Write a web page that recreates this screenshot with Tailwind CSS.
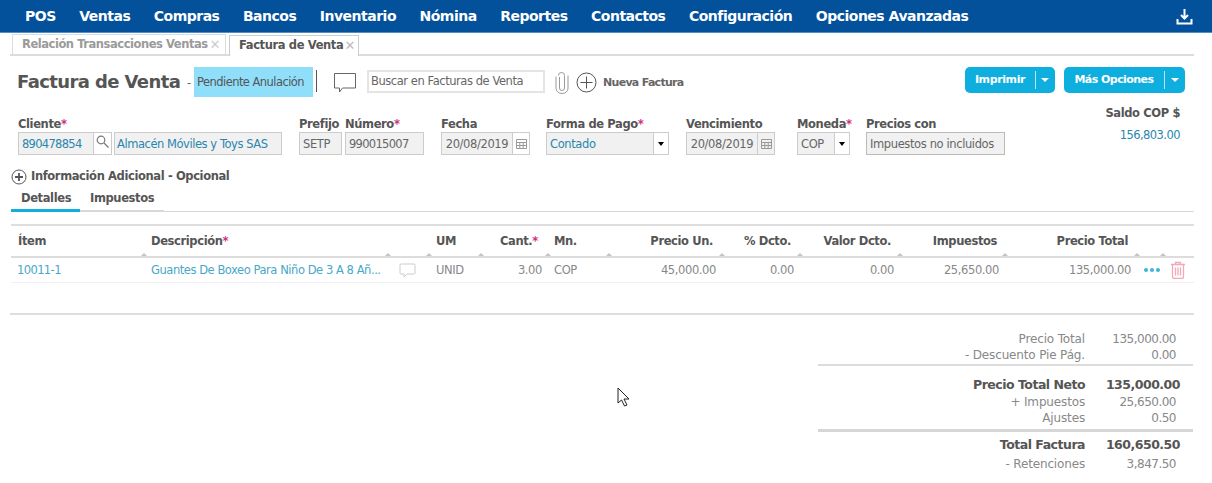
<!DOCTYPE html>
<html lang="es">
<head>
<meta charset="utf-8">
<script src="https://cdn.jsdelivr.net/npm/@tailwindcss/browser@4"></script>
<title>Factura de Venta</title>
</head>
<body class="relative w-[1212px] h-[483px] overflow-hidden whitespace-nowrap bg-white font-['DejaVu_Sans',sans-serif] text-[11.5px] text-[#666] tracking-[-0.38px]">
<!-- nav -->
<nav class="flex items-center justify-between h-[33px] bg-[#03509b] border-b border-[#4f8fc9] pl-[25px] pr-[19px] text-white">
  <div class="flex gap-[23.5px] text-[14px] font-bold tracking-[-0.5px]">
    <span>POS</span><span>Ventas</span><span>Compras</span><span>Bancos</span><span>Inventario</span><span>Nómina</span><span>Reportes</span><span>Contactos</span><span>Configuración</span><span>Opciones Avanzadas</span>
  </div>
  <svg width="17" height="17" viewBox="0 0 17 17" fill="none" stroke="white" stroke-width="2"><path d="M8.5 1v9M5 7l3.5 3.5L12 7M1.5 11v4.5h14V11"/></svg>
</nav>
<!-- tabs -->
<div class="flex items-end gap-[3px] h-[23px] ml-[10px] mr-[18px] pl-[2px] border-b-2 border-[#dcdcdc]">
  <div class="flex items-center justify-between h-[20px] w-[214px] pl-[9px] pr-[5px] border border-b-0 border-[#ddd] font-bold text-[#9a9a9a] tracking-[-0.45px]"><span>Relación Transacciones Ventas</span><span class="font-normal text-[#ccc] text-[13px]">✕</span></div>
  <div class="flex items-center justify-between h-[21px] w-[130px] pl-[9px] pr-[3px] border border-[#ccc] border-b-0 bg-white font-bold text-[#555] -mb-[2px]"><span>Factura de Venta</span><span class="font-normal text-[#bbb] text-[13px]">✕</span></div>
</div>
<!-- title row -->
<div class="flex items-start h-[30px] mt-[11px] pl-[17px]">
  <h1 class="w-[170px] mt-[1px] text-[18px] leading-[28px] font-bold text-[#555] tracking-[-0.6px]">Factura de Venta</h1>
  <span class="w-[7px] pt-[1px] leading-[30px] text-[#666]">-</span>
  <div class="flex items-center w-[119px] h-[30px] pl-[3px] pt-[1px] bg-[#8fdffa] text-[#555] tracking-[-0.55px]">Pendiente Anulación</div>
  <div class="w-px h-[22px] mt-[3px] ml-[3px] bg-[#555]"></div>
  <svg class="mt-[5px] ml-[16px]" width="24" height="22" viewBox="0 0 24 22" fill="none" stroke="#666"><path d="M1.5 1.5h21v14.5h-13l-3 4v-4h-5z"/></svg>
  <div class="flex items-center w-[178px] h-[23px] mt-[3px] ml-[10px] pl-[2px] pt-[1px] border-2 border-[#e4e4e4] text-[#666] tracking-[-0.44px]">Buscar en Facturas de Venta</div>
  <svg class="mt-[4px] ml-[10px]" width="14" height="23" viewBox="0 0 14 23" fill="none" stroke="#999"><path d="M4.5 6v11a2.5 2.5 0 0 0 5 0V4.500a3 3 0 0 0-6 0M1 5.500v12a6 5 0 0 0 12 0v-13"/></svg>
  <svg class="mt-[5px] ml-[7px]" width="21" height="21" viewBox="0 0 21 21" fill="none" stroke="#555"><circle cx="10.500" cy="10.500" r="9.500"/><path d="M10.500 4.500v12M4.500 10.500h12"/></svg>
  <span class="ml-[6px] leading-[32px] text-[11px] font-bold text-[#666] tracking-[-0.7px]">Nueva Factura</span>
  <div class="flex items-center w-[90px] h-[26px] ml-auto rounded-[5px] bg-[#0eaede] text-white text-[11px] font-bold">
    <span class="w-[70px] pt-[1px] text-center">Imprimir</span><span class="w-px h-[18px] bg-white/70"></span><span class="ml-[5px] w-0 h-0 border-x-[4px] border-t-[4px] border-x-transparent border-t-white"></span>
  </div>
  <div class="flex items-center w-[121px] h-[26px] ml-[9px] mr-[27px] rounded-[5px] bg-[#0eaede] text-white text-[11px] font-bold tracking-[-0.55px]">
    <span class="w-[100px] pt-[1px] text-center">Más Opciones</span><span class="w-px h-[18px] bg-white/70"></span><span class="ml-[6px] w-0 h-0 border-x-[4px] border-t-[4px] border-x-transparent border-t-white"></span>
  </div>
</div>
<!-- form -->
<div class="relative flex h-[59px] mt-[8px] pl-[18px] font-normal">
  <div class="w-[281px]">
    <div class="h-[27px] pt-[12px] leading-[15px] font-bold text-[#555]">Cliente<b class="text-[#d0307a]">*</b></div>
    <div class="flex h-[23px]">
      <div class="flex items-center w-[76px] px-[3px] pt-[3px] border border-[#ccc] bg-[#f1f1f1] text-[#2b86ad] tracking-[-0.7px]">890478854</div>
      <div class="flex items-start justify-center w-[18px] pt-[2px] border-y border-r border-[#ccc]"><svg width="13" height="13" viewBox="0 0 13 13" fill="none" stroke="#777" stroke-width="1.200"><circle cx="5" cy="5" r="3.800"/><path d="M8 8l4.500 4.500"/></svg></div>
      <div class="flex items-center w-[168px] ml-[2px] pl-[2px] pt-[3px] border border-[#ccc] bg-[#f1f1f1] text-[#2b86ad] tracking-[-0.45px]">Almacén Móviles y Toys SAS</div>
    </div>
  </div>
  <div class="w-[46px]">
    <div class="h-[27px] pt-[12px] leading-[15px] font-bold text-[#555]">Prefijo</div>
    <div class="flex items-center w-[43px] h-[23px] px-[3px] pt-[3px] border border-[#ccc] bg-[#f1f1f1]">SETP</div>
  </div>
  <div class="w-[96px]">
    <div class="h-[27px] pt-[12px] leading-[15px] font-bold text-[#555]">Número<b class="text-[#d0307a]">*</b></div>
    <div class="flex items-center w-[79px] h-[23px] px-[3px] pt-[3px] border border-[#ccc] bg-[#f1f1f1] tracking-[-0.7px]">990015007</div>
  </div>
  <div class="w-[105px]">
    <div class="h-[27px] pt-[12px] leading-[15px] font-bold text-[#555]">Fecha</div>
    <div class="flex w-[89px] h-[23px] border border-[#ccc]">
      <div class="flex flex-1 items-center justify-center pt-[3px] bg-[#f1f1f1]">20/08/2019</div>
      <div class="flex items-center justify-center w-[17px] border-l border-[#ccc]"><svg width="11" height="10" viewBox="0 0 11 10" fill="none" stroke="#999"><path d="M.5.500h10v9H.5zM.5 3.500h10M.5 6.500h10M3.800 3.500v6M7.200 3.500v6"/></svg></div>
    </div>
  </div>
  <div class="w-[140px]">
    <div class="h-[27px] pt-[12px] leading-[15px] font-bold text-[#555]">Forma de Pago<b class="text-[#d0307a]">*</b></div>
    <div class="flex w-[123px] h-[23px] border border-[#ccc]">
      <div class="flex flex-1 items-center px-[3px] pt-[3px] bg-[#f1f1f1] text-[#2b86ad]">Contado</div>
      <div class="flex items-center justify-center w-[15px] border-l border-[#ccc]"><span class="w-0 h-0 border-x-[3px] border-t-[4px] border-x-transparent border-t-black"></span></div>
    </div>
  </div>
  <div class="w-[111px]">
    <div class="h-[27px] pt-[12px] leading-[15px] font-bold text-[#555]">Vencimiento</div>
    <div class="flex w-[89px] h-[23px] border border-[#ccc]">
      <div class="flex flex-1 items-center justify-center pt-[3px] bg-[#f1f1f1]">20/08/2019</div>
      <div class="flex items-center justify-center w-[17px] border-l border-[#ccc] bg-[#f1f1f1]"><svg width="11" height="10" viewBox="0 0 11 10" fill="none" stroke="#999"><path d="M.5.500h10v9H.5zM.5 3.500h10M.5 6.500h10M3.800 3.500v6M7.200 3.500v6"/></svg></div>
    </div>
  </div>
  <div class="w-[69px]">
    <div class="h-[27px] pt-[12px] leading-[15px] font-bold text-[#555]">Moneda<b class="text-[#d0307a]">*</b></div>
    <div class="flex w-[53px] h-[23px] border border-[#ccc]">
      <div class="flex flex-1 items-center px-[3px] pt-[3px] bg-[#f1f1f1]">COP</div>
      <div class="flex items-center justify-center w-[15px] border-l border-[#ccc]"><span class="w-0 h-0 border-x-[3px] border-t-[4px] border-x-transparent border-t-black"></span></div>
    </div>
  </div>
  <div class="w-[139px]">
    <div class="h-[27px] pt-[12px] leading-[15px] font-bold text-[#555]">Precios con</div>
    <div class="flex items-center w-[139px] h-[23px] px-[3px] pt-[3px] border border-[#bbb] bg-[#f1f1f1]">Impuestos no incluidos</div>
  </div>
  <div class="ml-auto mr-[32px] text-right">
    <div class="leading-[15px] mt-[1px] font-bold text-[#555]">Saldo COP $</div>
    <div class="mt-[7px] leading-[15px] text-[#2b86ad] tracking-[-0.55px]">156,803.00</div>
  </div>
</div>
<!-- optional -->
<div class="flex items-center h-[20px] mt-[3px] pl-[11px] font-bold text-[#555]">
  <svg class="mr-[4px]" width="16" height="16" viewBox="0 0 16 16" fill="none" stroke="#555"><circle cx="8" cy="8" r="7"/><path d="M8 4v8M4 8h8" stroke-width="1.800"/></svg>
  Información Adicional - Opcional
</div>
<!-- sub tabs -->
<div class="flex h-[25px] ml-[11px] mr-[18px] border-b border-[#d8d8d8] font-bold text-[#555]">
  <div class="w-[69px] h-[25px] pl-[10px] pt-[3px] border-b-[3px] border-[#12aee0]">Detalles</div>
  <div class="w-[84px] h-[25px] pl-[10px] pt-[3px] border-b-2 border-[#d8d8d8]">Impuestos</div>
</div>
<!-- table -->
<div class="mt-[12px] ml-[11px] mr-[18px] border-t-2 border-[#dedede]">
  <div class="relative grid grid-cols-[133px_244px_41px_52px_67px_61px_113px_78px_100px_105px_132px_26px_31px] h-[32px] pt-[2px] items-center border-b-2 border-[#dcdcdc] font-bold text-[#555]">
    <div class="pl-[7px]">Ítem</div><div class="pl-[7px]">Descripción<b class="text-[#d0307a]">*</b></div><div></div><div class="pl-[7px]">UM</div>
    <div class="pr-[10px] text-right">Cant.<b class="text-[#d0307a]">*</b></div><div class="pl-[6px]">Mn.</div>
    <div class="pr-[9px] text-right">Precio Un.</div><div class="pr-[9px] text-right">% Dcto.</div><div class="pr-[9px] text-right">Valor Dcto.</div><div class="pr-[8px] text-right">Impuestos</div><div class="pr-[9px] text-right">Precio Total</div><div></div><div></div>
    <span class="absolute bottom-0 left-[130px] w-0 h-0 border-x-[3px] border-b-[3px] border-x-transparent border-b-[#c4c4c4]"></span>
    <span class="absolute bottom-0 left-[374px] w-0 h-0 border-x-[3px] border-b-[3px] border-x-transparent border-b-[#c4c4c4]"></span>
    <span class="absolute bottom-0 left-[415px] w-0 h-0 border-x-[3px] border-b-[3px] border-x-transparent border-b-[#c4c4c4]"></span>
    <span class="absolute bottom-0 left-[467px] w-0 h-0 border-x-[3px] border-b-[3px] border-x-transparent border-b-[#c4c4c4]"></span>
    <span class="absolute bottom-0 left-[534px] w-0 h-0 border-x-[3px] border-b-[3px] border-x-transparent border-b-[#c4c4c4]"></span>
    <span class="absolute bottom-0 left-[595px] w-0 h-0 border-x-[3px] border-b-[3px] border-x-transparent border-b-[#c4c4c4]"></span>
    <span class="absolute bottom-0 left-[708px] w-0 h-0 border-x-[3px] border-b-[3px] border-x-transparent border-b-[#c4c4c4]"></span>
    <span class="absolute bottom-0 left-[786px] w-0 h-0 border-x-[3px] border-b-[3px] border-x-transparent border-b-[#c4c4c4]"></span>
    <span class="absolute bottom-0 left-[886px] w-0 h-0 border-x-[3px] border-b-[3px] border-x-transparent border-b-[#c4c4c4]"></span>
    <span class="absolute bottom-0 left-[991px] w-0 h-0 border-x-[3px] border-b-[3px] border-x-transparent border-b-[#c4c4c4]"></span>
    <span class="absolute bottom-0 left-[1123px] w-0 h-0 border-x-[3px] border-b-[3px] border-x-transparent border-b-[#c4c4c4]"></span>
    <span class="absolute bottom-0 left-[1149px] w-0 h-0 border-x-[3px] border-b-[3px] border-x-transparent border-b-[#c4c4c4]"></span>
  </div>
  <div class="grid grid-cols-[133px_244px_41px_52px_67px_61px_113px_78px_100px_105px_132px_26px_31px] h-[25px] items-center border-b border-[#f0f0f0] text-[#888]">
    <div class="pl-[6px] pt-[1px] text-[#48a8c8] tracking-[-0.6px]">10011-1</div><div class="pl-[7px] pt-[1px] text-[#48a8c8] tracking-[-0.45px]">Guantes De Boxeo Para Niño De 3 A 8 Añ...</div>
    <div class="pl-[11px]"><svg width="17" height="15" viewBox="0 0 17 15" fill="none" stroke="#ccc"><path d="M2 1h13a1 1 0 0 1 1 1v8a1 1 0 0 1-1 1H8l-3 3v-3H2a1 1 0 0 1-1-1V2a1 1 0 0 1 1-1z"/></svg></div>
    <div class="pl-[7px] pt-[1px]">UNID</div><div class="text-right pr-[6px] pt-[1px]">3.00</div><div class="pl-[6px] pt-[1px]">COP</div>
    <div class="pr-[6px] pt-[1px] text-right">45,000.00</div><div class="pr-[6px] pt-[1px] text-right">0.00</div><div class="pr-[6px] pt-[1px] text-right">0.00</div><div class="pr-[6px] pt-[1px] text-right">25,650.00</div><div class="pr-[6px] pt-[1px] text-right">135,000.00</div>
    <div class="flex justify-center gap-[2px] pl-[3px]"><span class="w-[4px] h-[4px] rounded-full bg-[#3fb4d6]"></span><span class="w-[4px] h-[4px] rounded-full bg-[#3fb4d6]"></span><span class="w-[4px] h-[4px] rounded-full bg-[#3fb4d6]"></span></div>
    <div class="pl-[7px]"><svg width="16" height="18" viewBox="0 0 16 18" fill="none" stroke="#f3a9b8" stroke-width="1.300"><path d="M1 3.500h14M5.500 3V1.500h5V3M2.500 3.500v12a2 2 0 0 0 2 2h7a2 2 0 0 0 2-2v-12M5.500 6.500v8M8 6.500v8M10.500 6.500v8"/></svg></div>
  </div>
</div>
<div class="h-[2px] mt-[30px] ml-[10px] mr-[18px] bg-[#dedede]"></div>
<!-- totals -->
<div class="mt-[16px] ml-[818px] w-[375px] leading-[16px] text-[12px] text-[#888] tracking-[-0.15px]">
  <div class="flex justify-end pr-[17px]"><span>Precio Total</span><span class="w-[91px] text-right tracking-[-0.5px]">135,000.00</span></div>
  <div class="flex justify-end pr-[17px]"><span>- Descuento Pie Pág.</span><span class="w-[91px] text-right tracking-[-0.5px]">0.00</span></div>
  <div class="h-[2px] mt-[1px] bg-[#dcdcdc]"></div>
  <div class="flex justify-end pr-[13px] mt-[11px] font-bold text-[12.5px] text-[#555] tracking-[-0.5px]"><span>Precio Total Neto</span><span class="w-[95px] text-right">135,000.00</span></div>
  <div class="flex justify-end pr-[17px] mt-[1px]"><span>+ Impuestos</span><span class="w-[91px] text-right tracking-[-0.5px]">25,650.00</span></div>
  <div class="flex justify-end pr-[17px]"><span>Ajustes</span><span class="w-[91px] text-right tracking-[-0.5px]">0.50</span></div>
  <div class="h-[3px] mt-[3px] bg-[#d6d6d6]"></div>
  <div class="flex justify-end pr-[13px] mt-[5px] font-bold text-[12.5px] text-[#555] tracking-[-0.5px]"><span>Total Factura</span><span class="w-[95px] text-right">160,650.50</span></div>
  <div class="flex justify-end pr-[17px] mt-[3px]"><span>- Retenciones</span><span class="w-[91px] text-right tracking-[-0.5px]">3,847.50</span></div>
</div>
<!-- cursor -->
<svg class="absolute left-[617px] top-[387px]" width="14" height="21" viewBox="0 0 14 21" fill="white" stroke="#222"><path d="M1 1v15l3.500-3 3 6 2.500-1-3-6h5z"/></svg>
</body>
</html>
